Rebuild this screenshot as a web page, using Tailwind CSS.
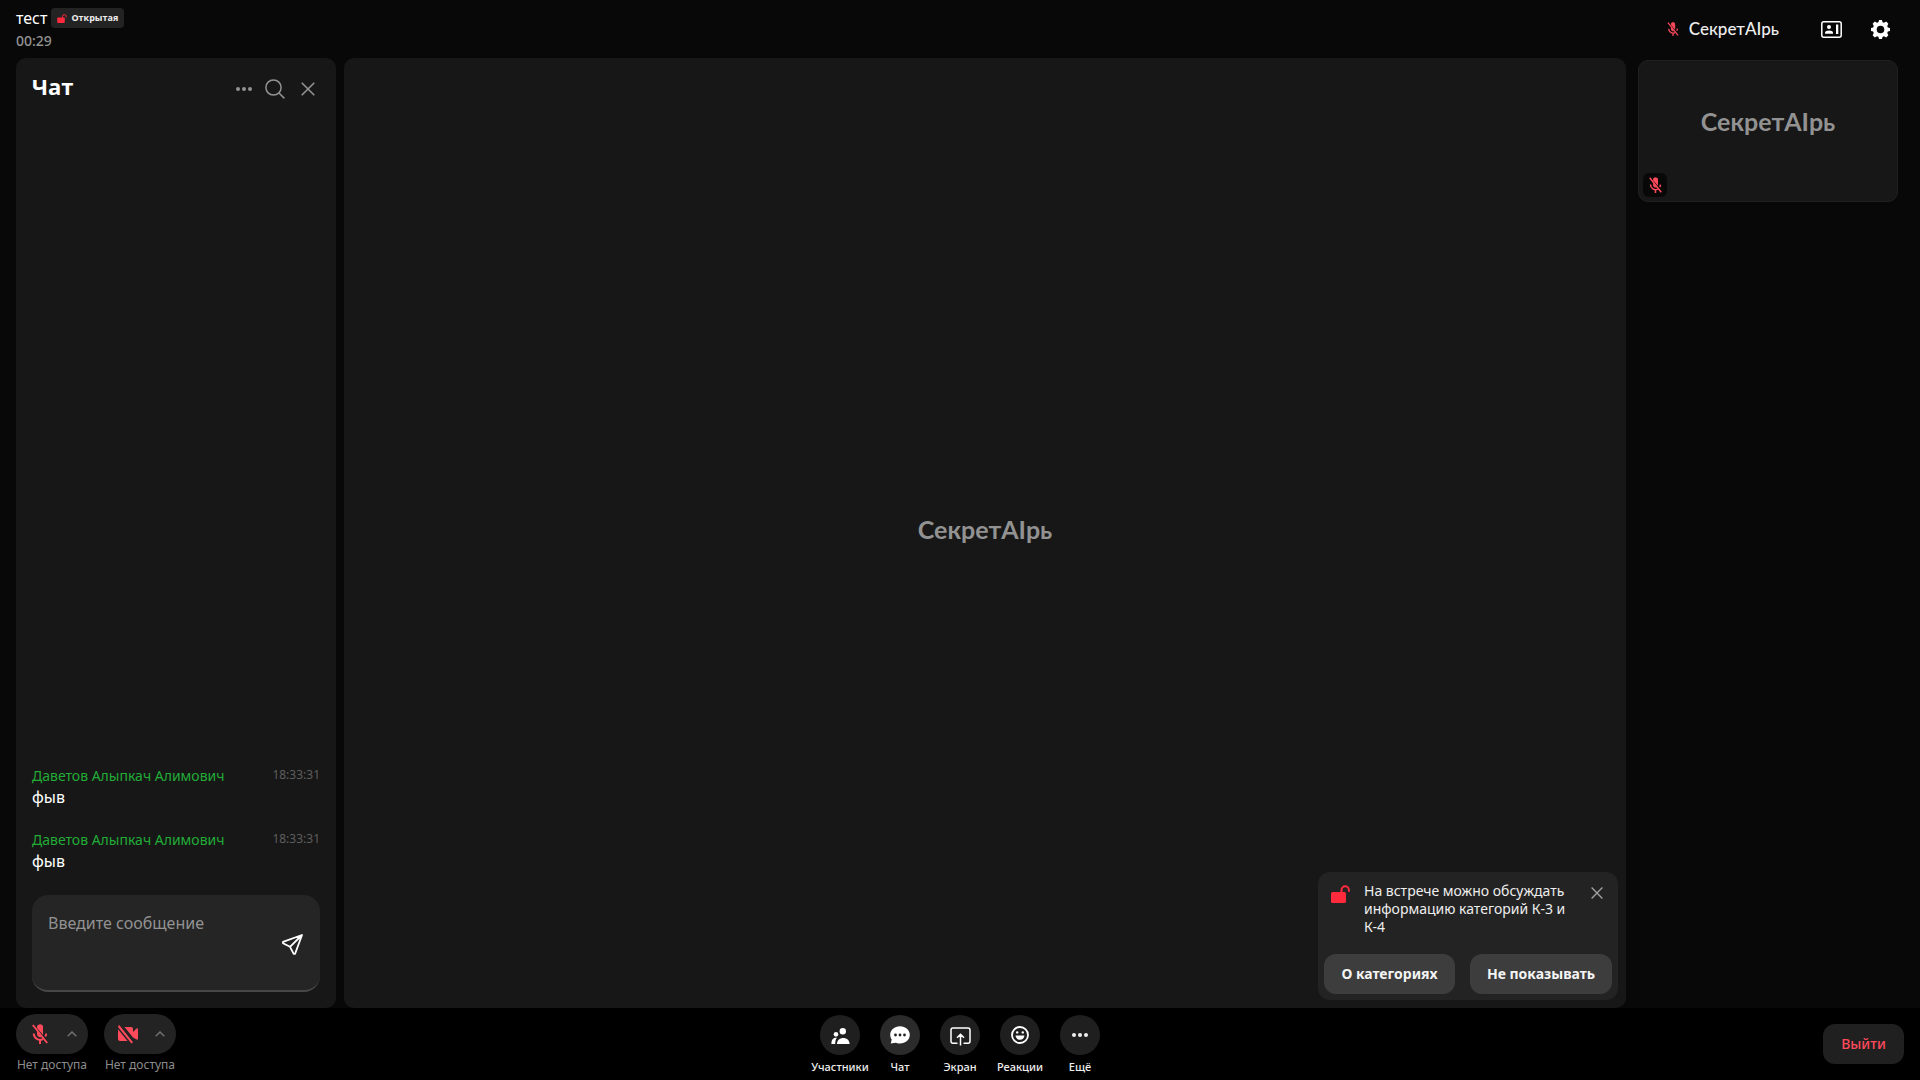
<!DOCTYPE html>
<html lang="ru">
<head>
<meta charset="utf-8">
<title>тест</title>
<script src="https://cdn.jsdelivr.net/npm/@tailwindcss/browser@4"></script>
</head>
<body class="flex h-screen flex-col overflow-hidden bg-[#080808] font-['Noto_Sans','Open_Sans',sans-serif] text-white">
<svg class="hidden" aria-hidden="true">
  <symbol id="mic-off" viewBox="0 0 16 20">
    <path d="M5 4v-.5A3 3 0 0 1 11 3.500v6c0 .3 0 .6-.1.900zM5 7.200l4.600 5.500A3 3 0 0 1 5 10z" fill="currentColor"/>
    <path d="M5.200 3.500L11 10.800V3.500a2.900 2.900 0 0 0-5.800 0z" fill="currentColor"/>
    <path d="M1.800 9.500a6.200 6.200 0 0 0 9 5.600M14.200 9.500a6.300 6.300 0 0 1-.9 3M8 16v4M.8 1l14.400 18" fill="none" stroke="currentColor" stroke-width="1.900"/>
  </symbol>
  <symbol id="unlock" viewBox="0 0 19 18">
    <rect y="7" width="15" height="11" rx="1.500" fill="currentColor"/>
    <path d="M10.500 8V5a3.700 3.700 0 0 1 7.400 0v1.800" fill="none" stroke="currentColor" stroke-width="2"/>
  </symbol>
  <symbol id="cross" viewBox="0 0 14 14"><path d="M.7.700l12.600 12.600M13.300.700L.7 13.300" fill="none" stroke="currentColor" stroke-width="1.600"/></symbol>
  <symbol id="chevron" viewBox="0 0 10 6"><path d="M.7 5.300L5 1l4.300 4.300" fill="none" stroke="currentColor" stroke-width="1.500"/></symbol>
  <symbol id="dots" viewBox="0 0 16 4"><g fill="currentColor"><circle cx="2" cy="2" r="2"/><circle cx="8" cy="2" r="2"/><circle cx="14" cy="2" r="2"/></g></symbol>
</svg>

<header class="flex h-[58px] shrink-0 justify-between pr-[30px] pl-4">
  <div class="pt-2">
    <div class="flex items-center gap-1">
      <h1 class="text-base leading-5">тест</h1>
      <span class="flex h-5 items-center gap-1 rounded bg-[#232323] px-[6px] font-['Open_Sans',sans-serif] text-[9px] font-bold text-[#eee]">
        <svg class="h-[9px] w-[10px] text-[#ff2a3c]"><use href="#unlock"/></svg>Открытая
      </span>
    </div>
    <time class="block pt-[3px] text-sm leading-5 font-medium text-[#929292]">00:29</time>
  </div>
  <div class="flex items-center">
    <svg class="mr-[10px] h-[14px] w-3 text-[#f5495a]"><use href="#mic-off"/></svg>
    <span class="mr-[42px] font-[Lato,sans-serif] text-[17px] font-medium text-[#eee]">СекретАIрь</span>
    <button class="mr-[29px]" aria-label="Вид">
      <svg class="h-[17px] w-[21px]" viewBox="0 0 21 17" fill="none"><rect x=".8" y=".8" width="19.400" height="15.400" rx="2" stroke="#fff" stroke-width="1.500"/><circle cx="8" cy="6" r="2" fill="#fff"/><path d="M4 12.800v-1c0-3.200 8-3.200 8 0v1zM15 3.500h2.300v9.600H15z" fill="#fff"/></svg>
    </button>
    <button aria-label="Настройки">
      <svg class="size-[19px]" viewBox="0 0 20 20"><path fill="#fff" fill-rule="evenodd" d="M8.500 0h3l.7 2.300 1.500.6L16 1.700 18.300 4l-1.200 2.300.6 1.500 2.300.7v3l-2.300.7-.6 1.500 1.200 2.300-2.300 2.300-2.300-1.200-1.500.6-.7 2.300h-3l-.7-2.300-1.500-.6L4 18.300 1.700 16l1.200-2.300-.6-1.500L0 11.500v-3l2.300-.7.6-1.500L1.700 4 4 1.700l2.300 1.200 1.500-.6zM10 6a4 4 0 1 0 0 8 4 4 0 0 0 0-8z"/></svg>
    </button>
  </div>
</header>

<main class="flex min-h-0 flex-1 pr-[22px] pl-4">
  <section class="flex w-80 shrink-0 flex-col justify-between rounded-[10px] bg-[#171717] p-4" aria-label="Чат">
    <div class="flex items-start justify-between">
      <h2 class="font-['Open_Sans',sans-serif] text-[22px] leading-6 font-bold">Чат</h2>
      <div class="flex items-center pt-[5px] pr-[5px] text-[#929292]">
        <button class="mr-[13px]" aria-label="Меню"><svg class="h-1 w-4"><use href="#dots"/></svg></button>
        <button class="mr-4" aria-label="Поиск"><svg class="size-5" viewBox="0 0 20 20" fill="none" stroke="currentColor" stroke-width="1.500"><circle cx="8.500" cy="8.500" r="7.600"/><path d="M14 14l5.400 5.400"/></svg></button>
        <button aria-label="Закрыть"><svg class="size-[14px]"><use href="#cross"/></svg></button>
      </div>
    </div>
    <div>
      <article class="mb-5 h-11">
        <div class="flex justify-between"><h3 class="text-sm leading-[18px] text-[#21ac36]">Даветов Алыпкач Алимович</h3><time class="text-xs leading-4 text-[#5e5e5e]">18:33:31</time></div>
        <p class="text-base leading-6">фыв</p>
      </article>
      <article class="mb-5 h-11">
        <div class="flex justify-between"><h3 class="text-sm leading-[18px] text-[#21ac36]">Даветов Алыпкач Алимович</h3><time class="text-xs leading-4 text-[#5e5e5e]">18:33:31</time></div>
        <p class="text-base leading-6">фыв</p>
      </article>
      <form class="flex h-[97px] items-center rounded-2xl border-b-2 border-[#484848] bg-[#252525] pr-[17px] pl-4">
        <textarea class="h-full min-w-0 flex-1 resize-none bg-transparent pt-4 text-base leading-6 outline-none placeholder:text-[#929292]" aria-label="Сообщение" placeholder="Введите сообщение"></textarea>
        <button type="button" class="pt-[3px]" aria-label="Отправить"><svg class="size-[21px]" viewBox="0 0 21 21" fill="none" stroke="#fff" stroke-width="1.800" stroke-linejoin="round"><path d="M20 1L1 7.800v1.400l7 3.600 3.700 7h1.400zM8 12.800L20 1"/></svg></button>
      </form>
    </div>
  </section>

  <section class="relative ml-2 flex min-w-0 flex-1 items-center justify-center rounded-[10px] bg-[#171717] pb-[6px]">
    <p class="font-[Lato,sans-serif] text-[25px] font-bold text-[#929292]">СекретАIрь</p>
    <aside class="absolute right-2 bottom-2 w-[300px] rounded-xl bg-[#232323] p-[6px]">
      <div class="flex items-start pt-1 pr-[9px] pl-[7px]">
        <svg class="mt-[3px] mr-[14px] h-[18px] w-[19px] shrink-0 text-[#ff2a3c]"><use href="#unlock"/></svg>
        <p class="flex-1 text-sm leading-[18px] text-[#eee]">На встрече можно обсуждать<br>информацию категорий К-3 и<br>К-4</p>
        <button class="mt-[5px]" aria-label="Закрыть"><svg class="size-3 text-[#a0a0a0]"><use href="#cross"/></svg></button>
      </div>
      <div class="mt-[18px] flex justify-between text-sm font-bold text-[#f4f4f4]">
        <button class="h-10 w-[131px] rounded-xl bg-[#3d3d3d]">О категориях</button>
        <button class="h-10 w-[142px] rounded-xl bg-[#3d3d3d]">Не показывать</button>
      </div>
    </aside>
  </section>

  <aside class="ml-3 w-[260px] shrink-0 pt-[2px]">
    <div class="relative flex h-[142px] items-center justify-center rounded-[10px] border border-[#202020] bg-[#171717] pb-[18px]">
      <p class="font-[Lato,sans-serif] text-[25px] font-bold text-[#929292]">СекретАIрь</p>
      <span class="absolute bottom-1 left-1 flex size-6 items-center justify-center rounded-md bg-[#080808]"><svg class="h-4 w-[13px] text-[#ff4a5c]"><use href="#mic-off"/></svg></span>
    </div>
  </aside>
</main>

<footer class="grid h-[72px] shrink-0 grid-cols-[1fr_auto_1fr] bg-black px-4">
  <div class="flex gap-4 pt-[6px] text-[#8c8c8c]">
    <div class="flex w-[72px] flex-col items-center">
      <div class="flex h-10 w-full items-center justify-between rounded-full bg-[#232323] pr-[11px] pl-4">
        <button aria-label="Микрофон"><svg class="h-5 w-4 text-[#ff4a5c]"><use href="#mic-off"/></svg></button>
        <button aria-label="Выбор микрофона"><svg class="h-[6px] w-[10px] text-[#707070]"><use href="#chevron"/></svg></button>
      </div>
      <span class="pt-[2px] text-xs leading-[18px] whitespace-nowrap">Нет доступа</span>
    </div>
    <div class="flex w-[72px] flex-col items-center">
      <div class="flex h-10 w-full items-center justify-between rounded-full bg-[#232323] pr-[11px] pl-[14px]">
        <button aria-label="Камера"><svg class="h-5 w-5 text-[#ff4a5c]" viewBox="0 0 20 20" fill="currentColor"><path d="M6.500 3H13a2 2 0 0 1 2 2v3l3.500-3.500q1.500-.6 1.500 1v9q0 1.600-1.500 1L15 13.600zM1 .8L15 18.200l-1.500 1.300L0 3zM0 5.200L9.500 17H2a2 2 0 0 1-2-2z"/></svg></button>
        <button aria-label="Выбор камеры"><svg class="h-[6px] w-[10px] text-[#707070]"><use href="#chevron"/></svg></button>
      </div>
      <span class="pt-[2px] text-xs leading-[18px] whitespace-nowrap">Нет доступа</span>
    </div>
  </div>

  <nav class="flex pt-[7px] text-[11px] leading-[18px] font-medium text-[#eee]">
    <button class="flex w-[60px] flex-col items-center gap-[3px]">
      <span class="flex size-10 items-center justify-center rounded-full bg-[#1f1f1f]"><svg class="mt-[2px] h-4 w-[19px]" viewBox="0 0 19 16" fill="#fff"><circle cx="11.800" cy="3.300" r="3.200"/><ellipse cx="5" cy="6.300" rx="2.300" ry="2.400"/><path d="M6 16c0-8 12.600-8 12.600 0zM.4 16c0-5 2-6.500 5.600-6.300C4.500 11.500 4.300 13 4.200 16z"/></svg></span>Участники
    </button>
    <button class="flex w-[60px] flex-col items-center gap-[3px]">
      <span class="flex size-10 items-center justify-center rounded-full bg-[#2b2b2b]"><svg class="h-[18px] w-5" viewBox="0 0 20 18"><path d="M10 .2c5.500 0 9.800 3.700 9.800 8.600s-4.300 8.700-9.800 8.700c-2 0-3.200-.3-4.300-.8L.7 17.600l1-4C.7 12.200.2 10.700.2 8.800.2 3.900 4.500.2 10 .2z" fill="#fff"/><g fill="#222"><circle cx="5.500" cy="9" r="1.400"/><circle cx="10" cy="9" r="1.400"/><circle cx="14.500" cy="9" r="1.400"/></g></svg></span>Чат
    </button>
    <button class="flex w-[60px] flex-col items-center gap-[3px]">
      <span class="flex size-10 items-center justify-center rounded-full bg-[#1f1f1f]"><svg class="mt-[2px] h-[19px] w-[21px]" viewBox="0 0 21 19" fill="none" stroke="#fff" stroke-width="1.500"><path d="M7.500 16.200H3a2 2 0 0 1-2-2V3a2 2 0 0 1 2-2h15a2 2 0 0 1 2 2v11.200a2 2 0 0 1-2 2h-4.500M10.500 18.500V7.500M7 10.800l3.500-3.500 3.500 3.500"/></svg></span>Экран
    </button>
    <button class="flex w-[60px] flex-col items-center gap-[3px]">
      <span class="flex size-10 items-center justify-center rounded-full bg-[#1f1f1f]"><svg class="size-[18px]" viewBox="0 0 18 18"><circle cx="9" cy="9" r="8" fill="none" stroke="#fff" stroke-width="1.800"/><g fill="#fff"><circle cx="6.200" cy="6.400" r="1.200"/><circle cx="11.800" cy="6.400" r="1.200"/><path d="M4.500 9.600h9c-.4 5.600-8.600 5.600-9 0z"/></g></svg></span>Реакции
    </button>
    <button class="flex w-[60px] flex-col items-center gap-[3px]">
      <span class="flex size-10 items-center justify-center rounded-full bg-[#1f1f1f]"><svg class="h-1 w-4"><use href="#dots"/></svg></span>Ещё
    </button>
  </nav>

  <div class="flex justify-end pt-4">
    <button class="h-10 w-[81px] rounded-xl bg-[#202020] text-sm font-medium text-[#ff4a5c]">Выйти</button>
  </div>
</footer>
</body>
</html>
